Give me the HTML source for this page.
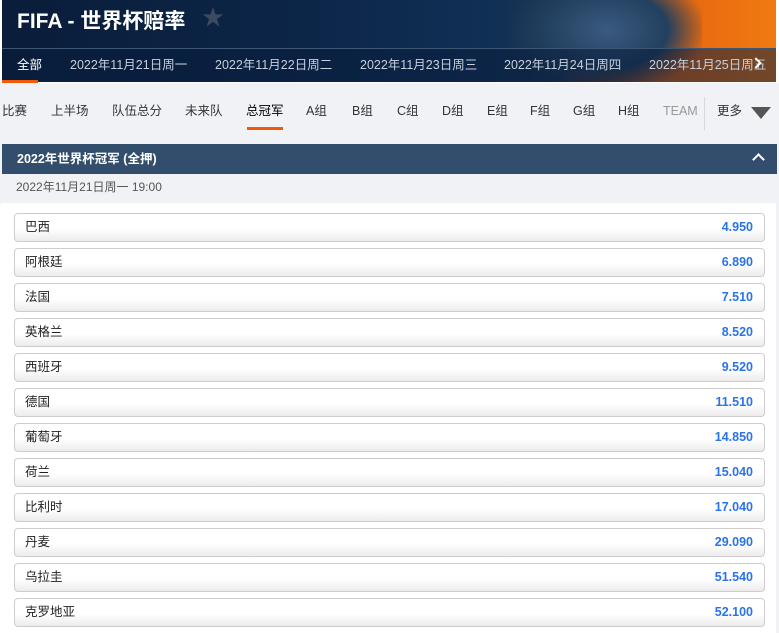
<!DOCTYPE html>
<html><head><meta charset="utf-8"><style>
*{margin:0;padding:0;box-sizing:border-box}
body{width:779px;height:630px;overflow:hidden;background:#fff;font-family:"Liberation Sans","Noto Sans CJK SC",sans-serif;position:relative;line-height:16px}
.hdr{position:absolute;left:2px;top:0;width:774px;height:82px;background:linear-gradient(90deg,#0a1d3a 0%,#0c2648 40%,#102f55 62%,#1a3450 72%,#7a3a18 78%,#e5620e 84%,#f07a12 100%);overflow:hidden}
.player{position:absolute;left:510px;top:-10px;width:190px;height:100px;background:radial-gradient(ellipse at 50% 40%,#3a5a80 0%,#22405f 45%,rgba(20,40,70,0) 75%)}
.title{position:absolute;left:15px;top:10px;color:#fff;font-size:21px;font-weight:bold;line-height:24px}
.star{position:absolute;left:200px;top:6px;color:#3b4a60;font-size:22px;line-height:24px}
.line{position:absolute;left:0;top:48px;width:774px;height:1px;background:#3d5674}
.tabs{position:absolute;left:0;top:49px;width:774px;height:33px;background:rgba(10,30,60,0.55)}
.tabs span{position:absolute;top:8px;color:#c8d0dc;font-size:12.5px;white-space:nowrap}
.tabs .a{color:#fff}
.nx{position:absolute;left:752px;top:59px;width:8px;height:8px;border-right:2px solid #fff;border-top:2px solid #fff;transform:rotate(45deg)}
.ul{position:absolute;left:0;top:80px;width:36px;height:3px;background:#f05a0a}
.sub{position:absolute;left:0;top:83px;width:779px;height:121px;background:#f0f2f5}
.st{position:absolute;top:103px;font-size:12.5px;color:#333;white-space:nowrap}
.sul{position:absolute;left:247px;top:127px;width:36px;height:3px;background:#f05a0a}
.sep{position:absolute;left:704px;top:97px;width:1px;height:33px;background:#d5d8dd}
.tri{position:absolute;left:751px;top:107px;width:0;height:0;border-left:10px solid transparent;border-right:10px solid transparent;border-top:12px solid #555}
.sec{position:absolute;left:2px;top:144px;width:775px;height:30px;background:#334e6d;color:#fff;font-weight:bold;font-size:12.5px;padding:7px 0 0 15px}
.chev{position:absolute;right:14px;top:11px;width:9px;height:9px;border-left:2.5px solid #fff;border-top:2.5px solid #fff;transform:rotate(45deg)}
.date{position:absolute;left:16px;top:179px;font-size:12px;color:#555}
.panel{position:absolute;left:2px;top:203px;width:774px;height:430px;background:#fff}
.right{position:absolute;left:776px;top:203px;width:3px;height:430px;background:#f0f2f5}
.row{position:absolute;left:14px;width:751px;height:29px;border:1px solid #cdcdcd;border-radius:4px;background:linear-gradient(#fff 0%,#fff 55%,#ececec 100%);font-size:12.5px}
.row .n{position:absolute;left:10px;top:5px;color:#222}
.row .o{position:absolute;right:11px;top:5px;color:#2a73e8;font-weight:bold}
</style></head><body>
<div class="hdr"><div class="player"></div>
<div class="title">FIFA - 世界杯赔率</div><div class="star">★</div>
<div class="line"></div>
<div class="tabs">
<span class="a" style="left:15px">全部</span>
<span style="left:68px">2022年11月21日周一</span>
<span style="left:213px">2022年11月22日周二</span>
<span style="left:358px">2022年11月23日周三</span>
<span style="left:502px">2022年11月24日周四</span>
<span style="left:647px">2022年11月25日周五</span>
</div>
</div>
<div class="nx"></div>
<div class="ul" style="left:2px"></div>
<div class="sub"></div>
<span class="st" style="left:2px">比赛</span>
<span class="st" style="left:51px">上半场</span>
<span class="st" style="left:112px">队伍总分</span>
<span class="st" style="left:185px">未来队</span>
<span class="st" style="left:246px;color:#000">总冠军</span>
<span class="st" style="left:306px">A组</span>
<span class="st" style="left:352px">B组</span>
<span class="st" style="left:397px">C组</span>
<span class="st" style="left:442px">D组</span>
<span class="st" style="left:487px">E组</span>
<span class="st" style="left:530px">F组</span>
<span class="st" style="left:573px">G组</span>
<span class="st" style="left:618px">H组</span>
<span class="st" style="left:663px;color:#999">TEAM</span>
<span class="st" style="left:717px">更多</span>
<div class="sul"></div><div class="sep"></div><div class="tri"></div>
<div class="sec">2022年世界杯冠军 (全押)<div class="chev"></div></div>
<div class="date">2022年11月21日周一 19:00</div>
<div class="panel"></div><div class="right"></div>
<div class="row" style="top:213px"><span class="n">巴西</span><span class="o">4.950</span></div>
<div class="row" style="top:248px"><span class="n">阿根廷</span><span class="o">6.890</span></div>
<div class="row" style="top:283px"><span class="n">法国</span><span class="o">7.510</span></div>
<div class="row" style="top:318px"><span class="n">英格兰</span><span class="o">8.520</span></div>
<div class="row" style="top:353px"><span class="n">西班牙</span><span class="o">9.520</span></div>
<div class="row" style="top:388px"><span class="n">德国</span><span class="o">11.510</span></div>
<div class="row" style="top:423px"><span class="n">葡萄牙</span><span class="o">14.850</span></div>
<div class="row" style="top:458px"><span class="n">荷兰</span><span class="o">15.040</span></div>
<div class="row" style="top:493px"><span class="n">比利时</span><span class="o">17.040</span></div>
<div class="row" style="top:528px"><span class="n">丹麦</span><span class="o">29.090</span></div>
<div class="row" style="top:563px"><span class="n">乌拉圭</span><span class="o">51.540</span></div>
<div class="row" style="top:598px"><span class="n">克罗地亚</span><span class="o">52.100</span></div>
</body></html>
